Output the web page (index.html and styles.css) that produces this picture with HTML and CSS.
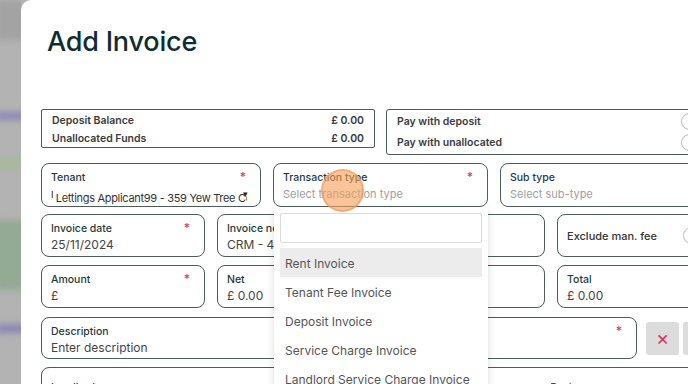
FILE: index.html
```html
<!DOCTYPE html>
<html lang="en">
	<head>
		<meta charset="utf-8" />
		<title>Add Invoice</title>
		<link rel="stylesheet" href="styles.css">
	</head>
	<body>
		<div class="backdrop">
			<div class="blurBlock blurTop"></div>
			<div class="blurBlock blurPurple"></div>
			<div class="blurBlock blurTan"></div>
			<div class="blurBlock blurGreen"></div>
			<div class="blurBlock blurPurple2"></div>
		</div>
		<div class="modal">
			<h1>Add Invoice</h1>
			<div class="form">
				<div class="row rowFunds">
					<div class="fundsBox">
						<div class="fundsLine"><span>Deposit Balance</span><span>£ 0.00</span></div>
						<div class="fundsLine"><span>Unallocated Funds</span><span>£ 0.00</span></div>
					</div>
					<div class="payBox">
						<div class="payLine"><span>Pay with deposit</span><span class="toggle"><span class="knob"></span></span></div>
						<div class="payLine"><span>Pay with unallocated</span><span class="toggle"><span class="knob"></span></span></div>
					</div>
				</div>
				<div class="row rowSelects">
					<div class="field fieldTenant">
						<div class="labelRow"><span>Tenant</span><span class="req">*</span></div>
						<div class="value valueTenant"><span class="tenantText"><span class="clipped">ı</span> Lettings Applicant99 - 359 Yew Tree Cottage</span><span class="caret">▾</span></div>
					</div>
					<div class="field fieldType">
						<div class="labelRow"><span>Transaction type</span><span class="req">*</span></div>
						<div class="value placeholder">Select transaction type</div>
						<div class="clickMark"></div>
						<div class="dropdown">
							<div class="searchBox"></div>
							<div class="option active">Rent Invoice</div>
							<div class="option">Tenant Fee Invoice</div>
							<div class="option">Deposit Invoice</div>
							<div class="option">Service Charge Invoice</div>
							<div class="option">Landlord Service Charge Invoice</div>
						</div>
					</div>
					<div class="field fieldGrow">
						<div class="labelRow"><span>Sub type</span></div>
						<div class="value placeholder">Select sub-type</div>
					</div>
				</div>
				<div class="row">
					<div class="field fieldSmall">
						<div class="labelRow"><span>Invoice date</span><span class="req">*</span></div>
						<div class="value">25/11/2024</div>
					</div>
					<div class="field fieldMid">
						<div class="labelRow"><span>Invoice no</span></div>
						<div class="value">CRM - 4</div>
					</div>
					<div class="field fieldGrow fieldSwitch">
						<span>Exclude man. fee</span>
						<span class="toggle"><span class="knob"></span></span>
					</div>
				</div>
				<div class="row">
					<div class="field fieldSmall">
						<div class="labelRow"><span>Amount</span><span class="req">*</span></div>
						<div class="value">£</div>
					</div>
					<div class="field fieldMid">
						<div class="labelRow"><span>Net</span></div>
						<div class="value">£ 0.00</div>
					</div>
					<div class="field fieldGrow">
						<div class="labelRow"><span>Total</span></div>
						<div class="value">£ 0.00</div>
					</div>
				</div>
				<div class="row rowDesc">
					<div class="field fieldDesc">
						<div class="labelRow"><span>Description</span><span class="req">*</span></div>
						<div class="value">Enter description</div>
					</div>
					<div class="iconButton clearButton">×</div>
					<div class="iconButton"></div>
				</div>
				<div class="row">
					<div class="field fieldWide">
						<div class="labelRow"><span>Landlord</span><span class="basis">Basis <span class="dot"></span></span></div>
					</div>
				</div>
			</div>
		</div>
	</body>
</html>
```

FILE: styles.css
```css
body {
	margin: 0px;
	height: 384px;
	overflow: hidden;
	display: flex;
	flex-direction: row;
	background: #b3b3b3;
	font-family: "Inter", "Liberation Sans", sans-serif;
}
.backdrop {
	width: 21px;
	flex-shrink: 0;
	display: flex;
	flex-direction: column;
	overflow: hidden;
}
.blurBlock {
	filter: blur(3px);
	margin-left: -4px;
	width: 30px;
}
.blurTop {
	height: 40px;
	margin-top: 0px;
	background: #a3a3a3;
}
.blurPurple {
	height: 8px;
	margin-top: 72px;
	background: #8c87b6;
}
.blurTan {
	height: 14px;
	margin-top: 36px;
	background: #a9b89f;
}
.blurGreen {
	height: 70px;
	margin-top: 50px;
	background: #93aa93;
}
.blurPurple2 {
	height: 9px;
	margin-top: 34px;
	background: #8a86b4;
}
.modal {
	flex: 1;
	background: #ffffff;
	border-top-left-radius: 10px;
	padding-left: 20px;
	min-width: 700px;
}
h1 {
	margin: 0px;
	padding: 26px 0px 0px 6px;
	font-size: 27px;
	line-height: 32px;
	font-weight: 500;
	color: #0f2c33;
	letter-spacing: -0.2px;
}
.form {
	margin-top: 51px;
	width: 679px;
	display: flex;
	flex-direction: column;
	gap: 8px;
}
.row {
	display: flex;
	flex-direction: row;
	gap: 12px;
}
.rowFunds {
	gap: 11px;
	height: 46px;
}
.rowSelects {
	margin-bottom: -1px;
}
.rowDesc {
	margin-top: 1px;
}
.fundsBox {
	width: 334px;
	height: 39px;
	box-sizing: border-box;
	border: 1px solid #4e5d59;
	border-radius: 2px;
	padding: 1px 10px 0px 10px;
}
.fundsLine, .payLine {
	display: flex;
	justify-content: space-between;
	align-items: center;
	font-size: 10.5px;
	font-weight: 600;
	color: #3b3b3b;
	height: 18px;
}
.payBox {
	flex: 1;
	box-sizing: border-box;
	border: 1px solid #4e5d59;
	border-radius: 3px;
	padding: 1px 8px 0px 10px;
}
.payLine {
	height: 21px;
}
.toggle {
	width: 30px;
	height: 17px;
	box-sizing: border-box;
	border-radius: 9px;
	background: #ececec;
	border: 1px solid #d6d6d6;
	display: flex;
	align-items: center;
}
.knob {
	width: 15px;
	height: 15px;
	border-radius: 50%;
	background: #ffffff;
	box-shadow: 0px 0px 2px rgba(0, 0, 0, 0.35);
}
.field {
	position: relative;
	height: 43px;
	box-sizing: border-box;
	border: 1px solid #4e5d59;
	border-radius: 8px;
	padding: 6px 9px 0px 9px;
}
.rowSelects .field {
	height: 44px;
}
.fieldTenant {
	width: 220px;
}
.fieldType {
	width: 215px;
}
.fieldGrow {
	flex: 1;
}
.fieldSmall {
	width: 164px;
}
.fieldMid {
	width: 328px;
}
.fieldDesc {
	width: 596px;
	height: 42px;
}
.fieldWide {
	flex: 1;
	padding-top: 12px;
}
.labelRow {
	display: flex;
	justify-content: space-between;
	font-size: 10.5px;
	line-height: 16px;
	font-weight: 500;
	color: #1f3a3d;
}
.req {
	color: #cf3d6e;
	font-size: 12px;
	line-height: 14px;
	padding-right: 5px;
}
.value {
	font-size: 12px;
	line-height: 16px;
	color: #444444;
	white-space: nowrap;
	overflow: hidden;
}
.rowSelects .value {
	font-size: 11px;
}
.valueTenant {
	display: flex;
	color: #333333;
	margin-right: -4px;
}
.tenantText {
	overflow: hidden;
	width: 196px;
	letter-spacing: -0.3px;
}
.clipped {
	display: inline-block;
	width: 2px;
	overflow: hidden;
}
.caret {
	font-size: 9px;
	margin-left: -4px;
	color: #222222;
}
.placeholder {
	color: #a0a0a0;
}
.fieldSwitch {
	display: flex;
	justify-content: space-between;
	align-items: center;
	padding: 0px 6px 0px 9px;
	font-size: 11px;
	font-weight: 500;
	color: #333333;
}
.iconButton {
	width: 33px;
	height: 33px;
	margin-top: 5px;
	border-radius: 3px;
	background: #dcdcdc;
	margin-left: -3px;
	margin-right: -5px;
}
.clearButton {
	color: #d6336c;
	font-size: 20px;
	line-height: 32px;
	text-align: center;
}
.basis {
	color: #444444;
	padding-right: 30px;
	display: flex;
	gap: 95px;
}
.dot {
	width: 8px;
	height: 8px;
	border-radius: 50%;
	background: #5a9e6f;
	margin-top: 6px;
}
.clickMark {
	position: absolute;
	left: 47px;
	top: 5px;
	width: 43px;
	height: 43px;
	box-sizing: border-box;
	border-radius: 50%;
	background: rgba(245, 160, 90, 0.62);
	border: 2px solid rgba(240, 150, 80, 0.5);
	z-index: 3;
}
.dropdown {
	position: absolute;
	left: 0px;
	top: 43px;
	width: 214px;
	box-sizing: border-box;
	padding: 6px;
	background: #ffffff;
	box-shadow: 0px 3px 8px rgba(0, 0, 0, 0.15);
	z-index: 2;
}
.searchBox {
	height: 30px;
	box-sizing: border-box;
	border: 1px solid #dadada;
	border-radius: 2px;
	margin-bottom: 5px;
}
.option {
	height: 29px;
	box-sizing: border-box;
	padding: 3px 0px 0px 5px;
	line-height: 26px;
	font-size: 12px;
	color: #555555;
	white-space: nowrap;
}
.option.active {
	background: #ececec;
}
```
